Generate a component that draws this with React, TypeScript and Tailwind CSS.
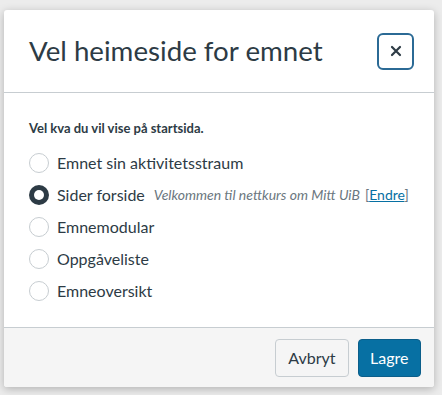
import React from "react";

const options = [
  { label: "Emnet sin aktivitetsstraum" },
  { label: "Sider forside", checked: true },
  { label: "Emnemodular" },
  { label: "Oppgåveliste" },
  { label: "Emneoversikt" },
];

function Radio({ checked }: { checked?: boolean }) {
  if (checked) {
    return (
      <span className="flex h-[20px] w-[20px] shrink-0 items-center justify-center rounded-full bg-[#2d3b45]">
        <span className="h-[10px] w-[10px] rounded-full bg-white" />
      </span>
    );
  }
  return <span className="h-[20px] w-[20px] shrink-0 rounded-full border border-[#c7cdd1] bg-white" />;
}

export default function App() {
  return (
    <div
      className="h-[395px] w-[442px] overflow-hidden bg-[#ececec] pt-[10px] pl-[4px]"
      style={{ fontFamily: "Lato, 'Open Sans', sans-serif" }}
    >
      <div className="flex h-[377px] w-[430px] flex-col rounded-[3px] bg-white text-[#2d3b45] shadow-[0_2px_8px_rgba(0,0,0,0.25)]">
        <div className="flex h-[83px] shrink-0 items-center justify-between border-b border-[#c7cdd1] pl-[25px] pr-[20px]">
          <h2 className="text-[27.7px] font-normal leading-none">Vel heimeside for emnet</h2>
          <button className="flex h-[37px] w-[37px] items-center justify-center rounded-[6px] border-2 border-[#2b6a95] text-[#2d3b45]">
            <svg width="12" height="12" viewBox="0 0 12 12">
              <path d="M2 2L10 10M10 2L2 10" stroke="currentColor" strokeWidth="2.2" strokeLinecap="round" />
            </svg>
          </button>
        </div>
        <div className="flex-1 pl-[25px] pr-[10px] pt-[29px]">
          <p className="text-[13px] font-bold leading-none">Vel kva du vil vise på startsida.</p>
          <div className="mt-[12px] flex flex-col">
            {options.map((o, i) => (
              <label key={i} className="flex h-[32px] items-center gap-[8px] whitespace-nowrap">
                <Radio checked={o.checked} />
                <span className="text-[16px] leading-none">{o.label}</span>
                {o.checked && (
                  <span className="ml-[1px] flex items-center text-[14px] leading-none">
                    <i className="text-[#6b7780]">Velkommen til nettkurs om Mitt UiB</i>
                    <span className="ml-[5px] text-[#6b7780]">
                      [<a className="text-[#0770a3] underline">Endre</a>]
                    </span>
                  </span>
                )}
              </label>
            ))}
          </div>
        </div>
        <div className="flex h-[60px] shrink-0 items-center justify-end gap-[9px] rounded-b-[3px] border-t border-[#c7cdd1] bg-[#f5f5f5] pr-[13px]">
          <button className="h-[38px] rounded-[4px] border border-[#c7cdd1] bg-[#f5f5f5] px-[12px] text-[16px] text-[#2d3b45]">
            Avbryt
          </button>
          <button className="h-[38px] rounded-[4px] border border-[#0b5e8a] bg-[#0770a3] px-[11.5px] text-[16px] text-white">
            Lagre
          </button>
        </div>
      </div>
    </div>
  );
}
